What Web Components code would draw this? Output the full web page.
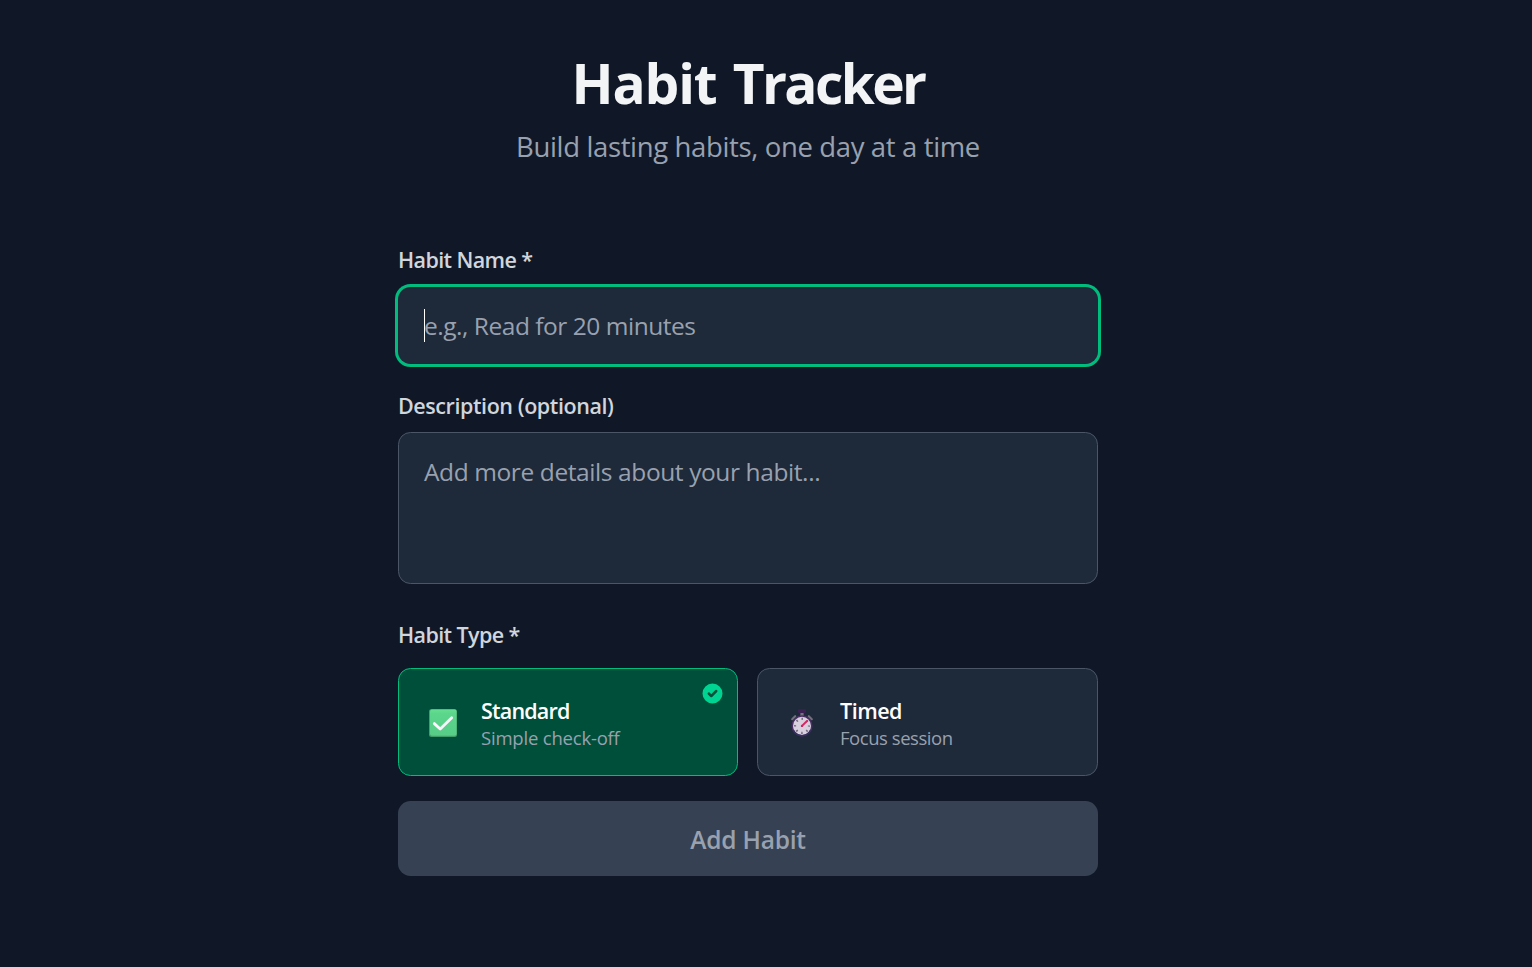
<!DOCTYPE html>
<html lang="en">
<head>
<meta charset="utf-8">
<title>Habit Tracker</title>
<style>
  html, body { margin: 0; background: #101828; }
  body { min-height: 967px; font-family: "Open Sans", "Noto Sans", sans-serif; color: #f3f4f6; overflow: hidden; }
</style>
</head>
<body>
<habit-app></habit-app>
<script>
class BaseElement extends HTMLElement {
  constructor() {
    super();
    this.attachShadow({ mode: 'open' }).innerHTML = this.constructor.markup;
  }
}

customElements.define('app-header', class extends BaseElement {
  static markup = `
    <style>
      :host { display: flex; flex-direction: column; align-items: center; gap: 11px; white-space: nowrap; }
      h1 { margin: 0; font-size: 55px; line-height: 62px; font-weight: 700; letter-spacing: -1.15px; word-spacing: 3px; color: #f3f4f6; }
      p { margin: 0; font-size: 27.5px; line-height: 44px; letter-spacing: -0.36px; color: #99a1af; }
    </style>
    <h1><slot name="title"></slot></h1>
    <p><slot></slot></p>`;
});

customElements.define('form-field', class extends BaseElement {
  static markup = `
    <style>
      :host { display: flex; flex-direction: column; gap: var(--label-gap, 11px); }
      .label { font-size: 21.5px; line-height: 31px; font-weight: 600; letter-spacing: var(--label-track, -0.4px); color: #d1d5dc; white-space: nowrap; }
    </style>
    <div class="label"><slot name="label"></slot></div>
    <slot></slot>`;
});

customElements.define('text-box', class extends BaseElement {
  static markup = `
    <style>
      :host { display: block; position: relative; box-sizing: border-box; height: 152px; padding: 22px 25px 0; border: 1px solid #4a5565; border-radius: 12.5px;
        background: #1e2939; color: #99a1af; font-size: 24.5px; line-height: 33px; letter-spacing: -0.4px; white-space: nowrap; }
      :host([focused]) { height: 77px; padding-top: 21px; border-color: transparent; background-clip: border-box; box-shadow: 0 0 0 3px #00bc7d; letter-spacing: -0.47px; }
      .caret { display: none; }
      :host([focused]) .caret { display: block; position: absolute; left: 25px; top: 21px; width: 1px; height: 33px; background: #fff; }
    </style>
    <slot></slot><span class="caret"></span>`;
});

customElements.define('type-card', class extends BaseElement {
  static markup = `
    <style>
      :host { display: flex; align-items: center; position: relative; box-sizing: border-box; height: 108px; padding: 0 24px 0 25px;
        border: 1px solid #4a5565; border-radius: 12.5px; background: #1e2939; white-space: nowrap; }
      :host([selected]) { border-color: #00bc7d; background: #004f3b; }
      .icon { display: flex; width: 38px; height: 38px; align-items: center; justify-content: center; margin-right: 19px; padding-top: 2px; }
      .name { font-size: 21.5px; line-height: 31px; font-weight: 600; letter-spacing: var(--name-track, -0.8px); color: #fff; }
      .hint { font-size: 18.5px; line-height: 24px; letter-spacing: var(--hint-track, -0.2px); color: #99a1af; }
      .badge { display: none; }
      :host([selected]) .badge { display: block; position: absolute; top: 12px; right: 12px; width: 25px; height: 25px; fill: #00d492; }
    </style>
    <div class="icon"><slot name="icon"></slot></div>
    <div>
      <div class="name"><slot name="name"></slot></div>
      <div class="hint"><slot></slot></div>
    </div>
    <svg class="badge" viewBox="0 0 20 20"><path fill-rule="evenodd" d="M10 18a8 8 0 100-16 8 8 0 000 16zm3.707-9.293a1 1 0 00-1.414-1.414L9 10.586 7.707 9.293a1 1 0 00-1.414 1.414l2 2a1 1 0 001.414 0l4-4z"/></svg>`;
});

customElements.define('check-icon', class extends BaseElement {
  static markup = `
    <style>:host, svg { display: block; }</style>
    <svg width="28" height="28" viewBox="0 0 28 28">
      <defs><linearGradient id="g" x2="0" y2="1"><stop offset="0" stop-color="#66df91"/><stop offset=".15" stop-color="#5bd68b"/><stop offset="1" stop-color="#57cd87"/></linearGradient></defs>
      <rect width="28" height="28" rx="2.5" fill="#429d6b"/>
      <rect x="1" y="0.5" width="26.5" height="26.3" rx="2" fill="url(#g)"/>
      <path d="M5.3 14.6 11.2 20 22.7 8.7" fill="none" stroke="#fbf5fd" stroke-width="2.8" stroke-linecap="round" stroke-linejoin="round"/>
    </svg>`;
});

customElements.define('stopwatch-icon', class extends BaseElement {
  static markup = `
    <style>:host, svg { display: block; }</style>
    <svg width="24" height="28" viewBox="0 0 24 28">
      <path d="M2.2 10.2 5.2 7.2" stroke="#746f7d" stroke-width="2.2" stroke-linecap="round"/>
      <path d="M21.8 10.2 18.8 7.2" stroke="#746f7d" stroke-width="2.2" stroke-linecap="round"/>
      <rect x="10.4" y="3" width="3.2" height="4" fill="#77717f"/>
      <rect x="8" y="0.3" width="8" height="3.6" rx=".8" fill="#3a2053"/>
      <circle cx="12" cy="16.9" r="9.8" fill="#d8cfdf" stroke="#4b2e64" stroke-width="1.5"/>
      <path d="M3.3 21.4A9.8 9.8 0 0 0 20.7 21.4" fill="none" stroke="#34305f" stroke-width="1.5"/>
      <circle cx="12" cy="16.9" r="7" fill="none" stroke="#746a7d" stroke-width="2.2" stroke-dasharray="1.5 3.998" stroke-dashoffset=".75"/>
      <path d="M12 16.9 17 12" stroke="#dc2461" stroke-width="1.9" stroke-linecap="round"/>
      <circle cx="12" cy="16.9" r="1.2" fill="#c52c66"/>
    </svg>`;
});

customElements.define('submit-button', class extends BaseElement {
  static markup = `
    <style>
      :host { display: flex; align-items: center; justify-content: center; box-sizing: border-box; height: 75px; padding-top: 2px; border-radius: 12.5px;
        background: #364153; color: #99a1af; font-size: 24.5px; line-height: 33px; font-weight: 600; letter-spacing: -0.2px; }
    </style>
    <slot></slot>`;
});

customElements.define('habit-app', class extends BaseElement {
  static markup = `
    <style>
      :host { display: block; box-sizing: border-box; width: 1496px; padding-top: 52px; }
      main { width: 700px; margin: 0 auto; display: flex; flex-direction: column; }
      form-field { --label-track: -0.6px; }
      .tight { letter-spacing: -2.6px; }
      .first { margin-top: 75px; --label-gap: 12px; }
      .desc { margin-top: 26px; --label-track: -0.42px; }
      .type { margin-top: 35px; --label-gap: 18px; }
      .cards { display: grid; grid-template-columns: 340px 341px; gap: 19px; }
      .timed { --hint-track: -0.45px; --name-track: -0.5px; }
      submit-button { margin-top: 25px; }
    </style>
    <main>
      <app-header><span slot="title">Habit <span class="tight">Tracker</span></span>Build lasting habits, one day at a time</app-header>
      <form-field class="first"><span slot="label">Habit Name *</span><text-box focused>e.g., Read for 20 minutes</text-box></form-field>
      <form-field class="desc"><span slot="label">Description (optional)</span><text-box>Add more details about your habit...</text-box></form-field>
      <form-field class="type"><span slot="label">Habit Type *</span>
        <div class="cards">
          <type-card selected><check-icon slot="icon"></check-icon><span slot="name">Standard</span>Simple check-off</type-card>
          <type-card class="timed"><stopwatch-icon slot="icon"></stopwatch-icon><span slot="name">Timed</span>Focus session</type-card>
        </div>
      </form-field>
      <submit-button>Add Habit</submit-button>
    </main>`;
});
</script>
</body>
</html>
